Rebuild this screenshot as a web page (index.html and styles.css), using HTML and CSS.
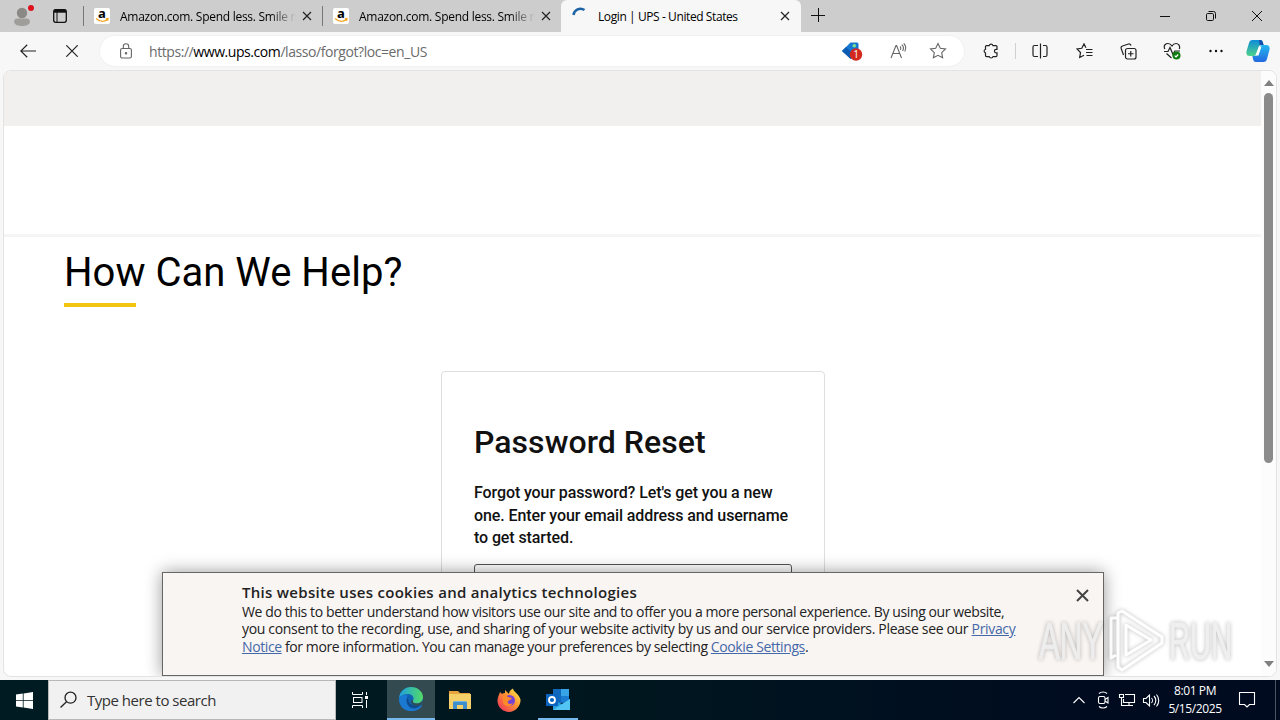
FILE: index.html
```html
<!DOCTYPE html>
<html lang="en">
<head>
    <meta charset="UTF-8">
    <meta name="viewport" content="width=device-width, initial-scale=1.0">
    <title>Login | UPS - United States</title>
    <link rel="stylesheet" href="styles.css">
</head>
<body>
    <div class="desktop">
        <!-- Tab strip -->
        <div class="tab-strip">
            <div class="profile">
                <svg width="20" height="22" viewBox="0 0 20 22">
                    <circle cx="10" cy="8" r="5.2" fill="#8b8986"/>
                    <path d="M2 17c0-2.500 1.500-3.500 3.500-3.500h9c2 0 3.500 1 3.500 3.500-1 3-4 4-8 4s-7-1-8-4z" fill="#a09e9b"/>
                    <circle cx="19" cy="3" r="3" fill="#e0101c"/>
                </svg>
            </div>
            <div class="tab-actions">
                <svg width="16" height="16" viewBox="0 0 16 16" fill="none" stroke="#111">
                    <rect x="1.700" y="1.700" width="12.600" height="12.600" rx="2" stroke-width="1.300"/>
                    <path d="M2 3.200h12" stroke-width="3"/>
                    <path d="M5 4v10"/>
                </svg>
            </div>
            <div class="tab">
                <svg class="favicon" width="16" height="16" viewBox="0 0 16 16">
                    <rect width="16" height="16" rx="2" fill="#fff"/>
                    <text x="8" y="10" text-anchor="middle" class="amazon-a">a</text>
                    <path d="M2 10.500c4 3.500 8 3.500 11.500 1M11.800 10.800l2.200-.2-.5 2.200" fill="none" stroke="#f5a623" stroke-width="1.300"/>
                </svg>
                <span class="tab-title faded">Amazon.com. Spend less. Smile m</span>
                <svg class="tab-close" width="10" height="10" viewBox="0 0 10 10"><path d="M1 1l8 8M9 1l-8 8"/></svg>
            </div>
            <div class="tab">
                <svg class="favicon" width="16" height="16" viewBox="0 0 16 16">
                    <rect width="16" height="16" rx="2" fill="#fff"/>
                    <text x="8" y="10" text-anchor="middle" class="amazon-a">a</text>
                    <path d="M2 10.500c4 3.500 8 3.500 11.500 1M11.800 10.800l2.200-.2-.5 2.200" fill="none" stroke="#f5a623" stroke-width="1.300"/>
                </svg>
                <span class="tab-title faded">Amazon.com. Spend less. Smile m</span>
                <svg class="tab-close" width="10" height="10" viewBox="0 0 10 10"><path d="M1 1l8 8M9 1l-8 8"/></svg>
            </div>
            <div class="tab active">
                <svg class="favicon" width="16" height="16" viewBox="0 0 16 16" fill="none">
                    <path d="M1.500 7A7 7 0 0 1 12.500 2" stroke="#1c62a5" stroke-width="2.500"/>
                </svg>
                <span class="tab-title">Login | UPS - United States</span>
                <svg class="tab-close" width="10" height="10" viewBox="0 0 10 10"><path d="M1 1l8 8M9 1l-8 8"/></svg>
            </div>
            <div class="new-tab">
                <svg width="14" height="14" viewBox="0 0 14 14" stroke="#111"><path d="M7.500 0v14M0 7.500h14"/></svg>
            </div>
            <div class="window-controls">
                <div class="control"><svg width="10" height="10" viewBox="0 0 10 10"><path d="M0 5.500h10"/></svg></div>
                <div class="control">
                    <svg width="10" height="10" viewBox="0 0 10 10">
                        <rect x=".5" y="2.500" width="7" height="7" rx="1.200"/>
                        <path d="M2.500.5h5a2 2 0 0 1 2 2v5"/>
                    </svg>
                </div>
                <div class="control"><svg width="10" height="10" viewBox="0 0 10 10"><path d="M0 0l10 10M10 0L0 10"/></svg></div>
            </div>
        </div>

        <!-- Toolbar -->
        <div class="toolbar">
            <div class="nav-btn">
                <svg width="16" height="14" viewBox="0 0 16 14"><path d="M16 7H1M7.200.7L.8 7l6.400 6.300"/></svg>
            </div>
            <div class="nav-btn">
                <svg width="12" height="12" viewBox="0 0 12 12"><path d="M.3.3l11.400 11.400M11.700.3L.3 11.700"/></svg>
            </div>
            <div class="address-bar">
                <svg class="lock" width="12" height="16" viewBox="0 0 12 16">
                    <rect x=".6" y="5.500" width="10.800" height="9.500" rx="1.500"/>
                    <path d="M3.300 5.500V3.400a2.700 2.700 0 0 1 5.400 0v2.100"/>
                    <circle cx="6" cy="10.300" r=".7" fill="#666"/>
                </svg>
                <span class="url">https://<b>www.ups.com</b>/lasso/forgot?loc=en_US</span>
                <svg class="tag" width="22" height="20" viewBox="0 0 22 20">
                    <path d="M1 10L9.500 1.500h6.500a1.500 1.500 0 0 1 1.500 1.500v6.500L10 18z" fill="#1677d2"/>
                    <path d="M1 10l4-4 8 8-3.500 4z" fill="#0c5cb5"/>
                    <circle cx="13.300" cy="4.800" r="1.800" fill="#7ee08a"/>
                    <circle cx="15" cy="13.500" r="6.200" fill="#d2281e"/>
                    <text x="15" y="17" text-anchor="middle" class="badge-num">1</text>
                </svg>
                <svg class="read" width="18" height="16" viewBox="0 0 18 16">
                    <path d="M1 15L6 2.500h.6L11.500 15M2.800 10.500h7M10 3.300c1 1 1 2.700.4 3.700M11.800 1.600c2 2 2 4.300.8 6.400M13.800.4c2.400 2.600 2.200 5.600.9 8"/>
                </svg>
                <svg class="star" width="18" height="18" viewBox="0 0 18 18">
                    <path d="M9 1.500l2.300 4.800 5.200.7-3.800 3.600.9 5.200L9 13.300l-4.600 2.500.9-5.200L1.500 7l5.200-.7z"/>
                </svg>
            </div>
            <div class="tool-btn puzzle">
                <svg width="16" height="16" viewBox="0 0 16 16">
                    <path d="M3.500 2.600h2.700a2 2 0 0 1 3.800 0h3a1 1 0 0 1 1 1v2.700h-.8a1.800 1.800 0 0 0 0 3.600h.8v2.700a1 1 0 0 1-1 1h-3a2 2 0 0 1-3.800 0H3.500a1 1 0 0 1-1-1V10a2 2 0 0 1 0-3.800V3.600a1 1 0 0 1 1-1z"/>
                </svg>
            </div>
            <div class="tool-divider"></div>
            <div class="tool-btn">
                <svg width="16" height="16" viewBox="0 0 16 16"><path d="M6 2.500H2.500a1.500 1.500 0 0 0-1.500 1.500v8a1.500 1.500 0 0 0 1.500 1.500H6M8.500.500v15M11 2.500h2.500A1.500 1.500 0 0 1 15 4v8a1.500 1.500 0 0 1-1.500 1.500H11"/></svg>
            </div>
            <div class="tool-btn">
                <svg width="17" height="16" viewBox="0 0 17 16"><path d="M10 4.800L8 .900 5.800 5.300 1 6l3.500 3.500-.8 5L8 12.300M10 6.500h6.500M10 9.500h6.500M10.500 12.500h6"/></svg>
            </div>
            <div class="tool-btn">
                <svg width="17" height="17" viewBox="0 0 17 17"><rect x="5.500" y="5.500" width="10.500" height="10.500" rx="2"/><path d="M10.750 8v5.500M8 10.750h5.500M3.500 12L1.200 5.500A2 2 0 0 1 2.500 3L8.500 1a2 2 0 0 1 2.500 1.500"/></svg>
            </div>
            <div class="tool-btn">
                <svg width="18" height="18" viewBox="0 0 18 18">
                    <path d="M1.800 7C0 3 3 1.500 5 1.500S8.300 3 9 4c.8-1.300 2-2.500 4-2.500S17.500 3.500 16.300 7M1 9.500h4l2-4 3 7 1.800-3.500H17M3.500 11.500L8.500 16"/>
                    <circle cx="13.500" cy="13.500" r="4" fill="#107c10" stroke="none"/>
                    <path d="M11.800 13.700l1.200 1.200 2.200-2.400" stroke="#fff"/>
                </svg>
            </div>
            <div class="tool-btn">
                <svg width="16" height="4" viewBox="0 0 16 4"><g fill="#111" stroke="none"><circle cx="2.500" cy="2" r="1.200"/><circle cx="8" cy="2" r="1.200"/><circle cx="13.500" cy="2" r="1.200"/></g></svg>
            </div>
            <div class="tool-btn copilot">
                <svg width="24" height="22" viewBox="0 0 24 22">
                    <defs>
                        <linearGradient id="cpLeft" x1="0" y1="0" x2="0" y2="1"><stop offset="0" stop-color="#0d8bd8"/><stop offset="1" stop-color="#4fd38c"/></linearGradient>
                        <linearGradient id="cpRight" x1="0" y1="0" x2="0" y2="1"><stop offset="0" stop-color="#25b8ee"/><stop offset="1" stop-color="#2468e0"/></linearGradient>
                    </defs>
                    <path d="M6.500 0H14c2 0 2.500 1 3 3l.6 2h-2c-2 0-2.800 1-3.300 3l-1.600 5.500C10 15.500 9 16 7 16H3.500C1 16-.2 14 .6 11L3 3c.6-2 1.500-3 3.500-3z" fill="url(#cpLeft)" stroke="none"/>
                    <path d="M17.500 22H10c-2 0-2.500-1-3-3l-.6-3h2c2 0 2.800-1 3.300-3l1.600-5.500C14 5.500 15 5 17 5h3.500c2.500 0 3.700 2 2.900 5L21 19c-.6 2-1.500 3-3.500 3z" fill="url(#cpRight)" stroke="none"/>
                    <path d="M13 0h1c2 0 2.500 1 3 3l.6 2h-4z" fill="#164fae" stroke="none"/>
                    <path d="M13 6.500h2.500l-3 9H9.300z" fill="#fff" stroke="none"/>
                </svg>
            </div>
        </div>

        <!-- Page -->
        <div class="viewport">
            <div class="page">
                <div class="top-band"></div>
                <div class="header"></div>
                <div class="content">
                    <h1>How Can We Help?</h1>
                    <div class="card">
                        <h2>Password Reset</h2>
                        <p>
                            Forgot your password? Let's get you a new<br>
                            one. Enter your email address and username<br>
                            to get started.
                        </p>
                        <div class="field"></div>
                    </div>
                </div>
            </div>
            <div class="scrollbar">
                <span class="arrow up"></span>
                <span class="thumb"></span>
                <span class="arrow down"></span>
            </div>

            <div class="cookie-banner">
                <div class="cookie-text">
                    <strong>This website uses cookies and analytics technologies</strong>
                    <span>We do this to better understand how visitors use our site and to offer you a more personal experience. By using our website,</span>
                    <span class="line-2">you consent to the recording, use, and sharing of your website activity by us and our service providers. Please see our <a href="#">Privacy</a></span>
                    <span><a href="#">Notice</a> for more information. You can manage your preferences by selecting <a href="#">Cookie Settings</a>.</span>
                </div>
                <svg class="cookie-close" width="13" height="13" viewBox="0 0 13 13"><path d="M1 1l11 11M12 1L1 12" stroke="#444" stroke-width="2"/></svg>
            </div>

            <div class="watermark">
                <span class="any">ANY</span>
                <svg width="58" height="66" viewBox="0 0 58 66" fill="none" stroke="#fff" stroke-width="3" stroke-linejoin="round">
                    <path d="M10 10H3v40l5-3M14 3l40 26v6L14 62l-4-3V5z"/>
                    <path d="M18 17v30l25-15z"/>
                </svg>
                <span class="run">RUN</span>
            </div>
        </div>

        <!-- Taskbar -->
        <div class="taskbar">
            <div class="start">
                <svg width="17" height="17" viewBox="0 0 17 17" fill="#fff"><path d="M0 2.500l6.800-1v6.500H0zM7.600 1.400L17 0v8H7.600zM0 8.800h6.800v6.600l-6.800-1zM7.600 8.800H17V17l-9.400-1.400z"/></svg>
            </div>
            <div class="search">
                <svg width="18" height="18" viewBox="0 0 18 18" fill="none" stroke="#222" stroke-width="1.300"><circle cx="10.500" cy="6.700" r="5.500"/><path d="M6.500 10.700L.5 16.500"/></svg>
                <span>Type here to search</span>
            </div>
            <div class="task view">
                <svg width="17" height="16" viewBox="0 0 17 16" fill="none" stroke="#fff"><path d="M.5 0v2.500h10V0M.5 16v-2.500h10V16M14.500 0v3M14.500 8v8"/><rect x="1.500" y="5.500" width="8.500" height="5"/><rect x="13.500" y="4.500" width="2" height="2" fill="#fff"/></svg>
            </div>
            <div class="task current">
                <svg width="24" height="24" viewBox="0 0 24 24">
                    <defs>
                        <linearGradient id="edgeTop"><stop offset="0" stop-color="#1d9fe0"/><stop offset="1" stop-color="#53db67"/></linearGradient>
                    </defs>
                    <circle cx="12" cy="12" r="12" fill="#0f63b5"/>
                    <path d="M0 11C1 4 6 0 12 0c7 0 12 5 12 10 0 4-3 6.500-6 6.500-3.500 0-5-1.500-4-3 2-3-1-6.500-5-6.500-4 0-7 1.500-9 4z" fill="url(#edgeTop)"/>
                    <path d="M9 9c-3 3-2 9 2 12 4 2 8 1 11-3l1 1c-2 3-6 5-11 5C5 24 0 19 0 12c2-4 6-5 9-3z" fill="#1b79d1"/>
                    <path d="M9.500 9c-2 6 3 11.500 12.500 9-2 1.500-3.500 2.500-6 3C10 21.500 5 15 9.500 9z" fill="#114a8b"/>
                    <path d="M14 13.500c-1 1.500.5 3 4 3 2.200 0 4.200-1 5.200-2.800L24 15l-2 3c-5 2-9 0-10-3 0-2 1-3 2-1.500z" fill="#344a51"/>
                </svg>
            </div>
            <div class="task">
                <svg width="22" height="20" viewBox="0 0 22 20">
                    <path d="M0 1h9l2 2h10v3H0z" fill="#e8a33d"/>
                    <rect y="4" width="22" height="15" fill="#f5cf68"/>
                    <path d="M4 19v-7l2-1h10l2 1v7h-4v-4H8v4z" fill="#3e8fcb"/>
                    <path d="M5 11.500h12" stroke="#6db7e8"/>
                </svg>
            </div>
            <div class="task">
                <svg width="24" height="24" viewBox="0 0 24 24">
                    <defs>
                        <linearGradient id="fox" x1="1" y1="0" x2="0" y2="1"><stop offset="0" stop-color="#fff44f"/><stop offset=".45" stop-color="#ff9332"/><stop offset="1" stop-color="#ec2462"/></linearGradient>
                    </defs>
                    <path d="M3 4l2 2c1-1 2-1 3-1V2l4 4c0-2 1-4 4-5.500 0 3 6 5 7.500 11C24 18 18 24 12 24S0 19 .5 12C1 8 2 7 3 4z" fill="url(#fox)"/>
                    <circle cx="12.500" cy="12.500" r="5.500" fill="#7542d8"/>
                    <path d="M6 8c3-1 4 0 5 1l4 1c-1 2-3 2-4 3-1 3 2 4 5 2-1 4-9 5-10-1z" fill="#ff8a2a"/>
                </svg>
            </div>
            <div class="task running">
                <svg width="25" height="22" viewBox="0 0 25 22">
                    <rect x="7" y="0" width="16" height="14" fill="#1068bd"/>
                    <rect x="15" y="0" width="8" height="7" fill="#36a4e6"/>
                    <rect x="15" y="7" width="8" height="6" fill="#1a7dd2"/>
                    <path d="M7 11l9 4 8-5v11H7z" fill="#28a0de"/>
                    <path d="M7 21l17-11v11z" fill="#53c5f3"/>
                    <rect x="0" y="5" width="12" height="12" rx="1" fill="#0a64c0"/>
                    <circle cx="6" cy="11" r="3" fill="none" stroke="#fff" stroke-width="1.800"/>
                </svg>
            </div>
            <div class="tray">
                <svg width="24" height="20" viewBox="0 0 24 20"><path d="M6.500 13L12 7.500l5.500 5.500"/></svg>
                <svg width="24" height="20" viewBox="0 0 24 20"><rect x="7.500" y="6.500" width="6.500" height="7" rx="1.500"/><path d="M14 9.500l3-2v5.500l-3-2M8 3.500c2-2 6-2 8 0M8 16.500c2 2 6 2 8 0"/></svg>
                <svg width="24" height="20" viewBox="0 0 24 20"><path d="M10 4.500h9.500v8H8.500V9M14 12.500v3M10 15.500h8M4.500 4.500h4v3h-4zM6.500 7.500v8H10"/></svg>
                <svg width="24" height="20" viewBox="0 0 24 20"><path d="M4.500 8.500H7L10.500 5v11L7 12.500H4.500zM12.500 8c1.200 1.300 1.200 3.700 0 5M15 6c2.400 2.500 2.400 6.500 0 9M17.500 4.500c3 3.500 3 8.500 0 12"/></svg>
                <div class="clock">
                    <span class="time">8:01 PM</span>
                    <span class="date">5/15/2025</span>
                </div>
                <svg class="notify" width="18" height="18" viewBox="0 0 18 18"><path d="M1.500 1.500h15v12h-5L9 16l-2.500-2.500h-5z"/></svg>
                <span class="show-desktop"></span>
            </div>
        </div>
    </div>
</body>
</html>
```
FILE: styles.css
```css
* {
    margin: 0;
    padding: 0;
    box-sizing: border-box;
}

body {
    width: 1280px;
    height: 720px;
    overflow: hidden;
    font-family: "Open Sans", "Noto Sans", sans-serif;
    color: #111;
}

svg {
    display: block;
    flex-shrink: 0;
}

.desktop {
    display: flex;
    flex-direction: column;
    width: 1280px;
    height: 720px;
    background: #f7f7f7;
}

/* Tab strip */
.tab-strip {
    display: flex;
    height: 32px;
    background: #cdcdcd;
}

.profile {
    width: 44px;
    padding: 5px 0 0 12px;
}

.profile svg,
.favicon {
    overflow: visible;
}

.tab-actions {
    width: 40px;
    padding: 8px 0 0 8px;
    background: linear-gradient(#777, #777) right center / 1px 20px no-repeat;
}

.tab {
    display: flex;
    align-items: center;
    width: 239px;
    padding: 0 11px 0 10px;
    background: linear-gradient(#777, #777) right center / 1px 20px no-repeat;
}

.tab + .tab:not(.active) {
    width: 238px;
    padding-right: 10px;
    background: none;
}

.tab.active {
    width: 240px;
    padding-left: 11px;
    background: #f7f7f7;
    border-radius: 6px 6px 0 0;
}

.tab-title {
    flex: 1;
    margin-left: 10px;
    font-size: 12px;
    color: #000;
    white-space: nowrap;
    letter-spacing: -0.41px;
}

.tab-title.faded {
    letter-spacing: -0.27px;
    -webkit-mask-image: linear-gradient(90deg, #000 150px, transparent 176px);
    mask-image: linear-gradient(90deg, #000 150px, transparent 176px);
}

.amazon-a {
    font: bold 13px "Open Sans", sans-serif;
}

.tab-close {
    stroke: #222;
    stroke-width: 1.2;
}

.new-tab {
    padding: 8px 0 0 10px;
}

.window-controls {
    display: flex;
    margin-left: auto;
}

.control {
    display: flex;
    align-items: center;
    justify-content: center;
    width: 46px;
}

.control svg {
    fill: none;
    stroke: #111;
}

/* Toolbar */
.toolbar {
    display: flex;
    align-items: center;
    height: 38px;
    padding-left: 6px;
}

.nav-btn,
.tool-btn {
    display: flex;
    align-items: center;
    justify-content: center;
    width: 44px;
    height: 38px;
}

.nav-btn svg,
.tool-btn svg {
    fill: none;
    stroke: #222;
    stroke-width: 1.2;
}

.address-bar {
    display: flex;
    align-items: center;
    width: 864px;
    height: 30px;
    margin-left: 6px;
    padding: 0 17px 0 20px;
    border-radius: 15px;
    background: #fff;
    box-shadow: 0 0 1px 1px #f1f1f1;
}

.address-bar .lock,
.address-bar .read,
.address-bar .star {
    fill: none;
    stroke: #666;
    stroke-width: 1.1;
}

.url {
    flex: 1;
    margin-left: 17px;
    font-size: 14px;
    color: #6b6b6b;
    letter-spacing: -0.43px;
}

.url b {
    font-weight: 400;
    color: #000;
}

.badge-num {
    font: 10px "Open Sans", sans-serif;
    fill: #fff;
}

.read {
    margin-left: 27px;
}

.star {
    margin-left: 21px;
}

.puzzle {
    margin-left: 5px;
}

.tool-divider {
    width: 1px;
    height: 16px;
    margin: 0 2px;
    background: #d0d0d0;
}

.tool-btn.copilot {
    width: 40px;
}

/* Page */
.viewport {
    position: relative;
    display: flex;
    height: 607px;
    margin: 0 3px 3px;
    border: 1px solid #e3e3e3;
    border-radius: 8px;
    background: #fff;
}

.page {
    display: flex;
    flex-direction: column;
    flex: 1;
    overflow: hidden;
    border-radius: 7px 0 0 7px;
}

.top-band {
    height: 55px;
    background: #f2f0ee;
}

.header {
    height: 111px;
    border-bottom: 3px solid #f5f5f5;
}

.content {
    padding: 8px 60px 0;
}

h1 {
    font: 400 40px/56px Roboto, sans-serif;
    letter-spacing: 0.02px;
    color: #000;
}

h1::after {
    content: "";
    display: block;
    width: 72px;
    height: 4px;
    margin-top: 2px;
    background: #f2c511;
}

.card {
    width: 384px;
    height: 300px;
    margin: 64px 0 0 377px;
    padding: 48px 32px 0;
    border: 1px solid #dedede;
    border-radius: 4px;
}

h2 {
    font: 500 32px/44px Roboto, sans-serif;
    letter-spacing: 0.05px;
    color: #111;
}

.card p {
    margin-top: 18px;
    font: 500 16px/22.5px Roboto, sans-serif;
    letter-spacing: -0.1px;
    white-space: nowrap;
}

.field {
    width: 318px;
    height: 50px;
    margin-top: 14px;
    border: 1px solid #555;
    border-radius: 3px;
}

.scrollbar {
    display: flex;
    flex-direction: column;
    align-items: center;
    width: 15px;
    padding: 9px 0;
    border-radius: 0 7px 7px 0;
    background: #fcfcfc;
}

.arrow {
    border: 5px solid transparent;
}

.arrow.up {
    border-top: 0;
    border-bottom: 6px solid #808080;
}

.arrow.down {
    margin-top: auto;
    border-bottom: 0;
    border-top: 6px solid #808080;
}

.thumb {
    width: 9px;
    height: 370px;
    margin-top: 7px;
    border-radius: 5px;
    background: #8b8b8b;
}

/* Cookie notice lies over the page */
.cookie-banner {
    position: absolute;
    left: 158px;
    bottom: 0;
    display: flex;
    justify-content: space-between;
    width: 942px;
    height: 104px;
    padding: 11px 14px 0 79px;
    border: 1px solid #666;
    background: #f9f5f3;
    box-shadow: 0 0 16px rgba(0, 0, 0, 0.4);
    clip-path: inset(-20px -20px 0 -20px);
}

.cookie-text {
    display: flex;
    flex-direction: column;
    font-size: 14px;
    line-height: 17.6px;
    letter-spacing: -0.395px;
    white-space: nowrap;
    color: #222;
}

.cookie-text .line-2 {
    letter-spacing: -0.33px;
}

.cookie-text strong {
    margin-bottom: 1px;
    font-size: 15px;
    font-weight: 600;
    letter-spacing: 0.29px;
}

.cookie-text a {
    color: #4468a8;
}

.cookie-close {
    margin-top: 5px;
}

.watermark {
    position: absolute;
    left: 1035px;
    top: 537px;
    display: flex;
    align-items: center;
    filter: drop-shadow(0 0 2px rgba(0, 0, 0, 0.35));
    opacity: 0.8;
}

.watermark span {
    width: 62px;
    font: 400 52px/66px "Liberation Sans", sans-serif;
    color: #ececec;
    -webkit-text-stroke: 1px #ececec;
    transform-origin: left center;
    transform: scaleX(0.6);
}

.watermark svg {
    margin: 0 3px 0 7px;
}

.watermark .run {
    transform: scaleX(0.56);
}

/* Taskbar */
.taskbar {
    display: flex;
    height: 40px;
    background: linear-gradient(90deg, #001b22 0%, #00161f 50%, #000b20 85%);
}

.start {
    display: flex;
    align-items: center;
    justify-content: center;
    width: 48px;
}

.search {
    display: flex;
    align-items: center;
    width: 288px;
    padding-left: 11px;
    border: 1px solid #b8b8b8;
    background: #f1f1f1;
    font-size: 15px;
    letter-spacing: -0.48px;
    color: #333;
}

.search span {
    margin-left: 9px;
}

.task {
    display: flex;
    align-items: center;
    justify-content: center;
    width: 48px;
    margin-right: 1px;
}

.task.view {
    margin-right: 3px;
}

.task.current {
    background: #344a51;
    border-bottom: 2px solid #76b9ed;
}

.task.running {
    background: linear-gradient(#76b9ed, #76b9ed) center bottom / 40px 2px no-repeat;
}

.tray {
    display: flex;
    align-items: center;
    margin-left: auto;
}

.tray svg {
    fill: none;
    stroke: #fff;
    stroke-width: 1.1;
}

.clock {
    display: flex;
    flex-direction: column;
    align-items: center;
    width: 64px;
    font-size: 12px;
    line-height: 18px;
    letter-spacing: -0.4px;
    color: #fff;
}

.notify {
    margin-left: 11px;
}

.show-desktop {
    width: 5px;
    height: 40px;
    margin-left: 19px;
    border-left: 1px solid #4c5563;
}
```
